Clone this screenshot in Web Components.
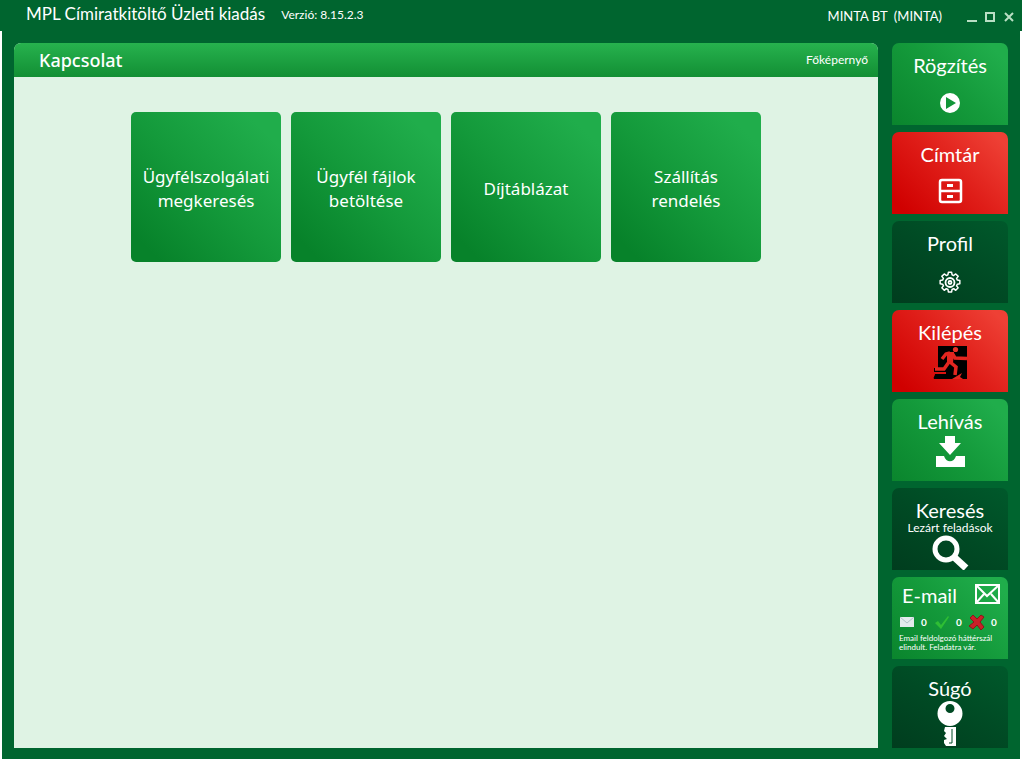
<!DOCTYPE html>
<html lang="hu">
<head>
<meta charset="utf-8">
<title>MPL Címiratkitöltő</title>
<style>
html,body{margin:0;background:#fff}
body{font-family:Lato,"Open Sans",sans-serif;color:#fff}
</style>
</head>
<body>
<mpl-app></mpl-app>
<script>
const define = (name, html) => {
  const template = document.createElement('template');
  template.innerHTML = html;
  customElements.define(name, class extends HTMLElement {
    constructor() {
      super();
      this.attachShadow({mode: 'open'}).append(template.content.cloneNode(true));
    }
  });
};

define('mpl-titlebar', `
<style>
:host{display:flex;height:31px;box-sizing:border-box;padding:0 3px 0 26px;background:#00652f;align-items:flex-start}
h1{margin:0;font-size:17px;font-weight:400;line-height:28px;white-space:nowrap}
.version{margin-left:16px;font-size:12px;line-height:30px}
.user{margin-left:auto;font-size:13px;line-height:32px;white-space:pre}
.controls{display:flex;margin:8px 0 0 20px}
button{all:unset;width:19px;height:18px}
svg{display:block;width:19px;height:18px;fill:none;stroke:#b9dfc4;stroke-width:2}
</style>
<h1>MPL Címiratkitöltő Üzleti kiadás</h1>
<span class="version">Verzió: 8.15.2.3</span>
<span class="user">MINTA BT  (MINTA)</span>
<div class="controls">
<button aria-label="Kis méret"><svg viewBox="0 0 19 18"><path d="M5 13h10"/></svg></button>
<button aria-label="Teljes méret"><svg viewBox="0 0 19 18"><path d="M5 5h8v8H5z"/></svg></button>
<button aria-label="Bezárás"><svg viewBox="0 0 19 18"><path d="m5 5 8 8m0-8-8 8"/></svg></button>
</div>`);

define('mpl-panel', `
<style>
:host{display:flex;flex-direction:column;flex:1;min-width:0;background:#dff3e4;border-radius:7px 7px 0 0}
header{display:flex;height:34px;padding:0 10px 0 25px;align-items:center;justify-content:space-between;background:linear-gradient(#27b24e,#128f34);border-radius:7px 7px 0 0}
h2{margin:0;font:500 18px/34px "Noto Sans",sans-serif}
a{color:#fff;text-decoration:none;font-size:12px;line-height:34px}
.tiles{display:flex;flex-wrap:wrap;justify-content:center;gap:10px;padding:35px 20px}
</style>
<header><h2><slot name="title"></slot></h2><a href="#">Főképernyő</a></header>
<div class="tiles"><slot></slot></div>`);

define('mpl-tile', `
<style>
:host{display:block;width:150px;height:150px}
button{all:unset;box-sizing:border-box;display:flex;width:100%;height:100%;padding:4px 8px 0;align-items:center;justify-content:center;text-align:center;border-radius:5px;background:linear-gradient(45deg,#07822a 10%,#149a3b 50%,#20ad4b 88%);font:17px/24px "Noto Sans",sans-serif}
</style>
<button><span><slot></slot></span></button>`);

define('mpl-nav-tile', `
<style>
:host{--fill:linear-gradient(45deg,#0a852d,#149a3b 50%,#20ad4b 90%);display:flex;flex:1}
:host([tone=red]){--fill:linear-gradient(45deg,#d00000 8%,#df1d18 50%,#ee4035 92%)}
:host([tone=dark]){--fill:linear-gradient(30deg,#003d1e,#004a24 50%,#00592b)}
button{all:unset;box-sizing:border-box;display:flex;flex-direction:column;width:100%;min-height:82px;padding-top:11px;border-radius:7px 7px 0 0;background:var(--fill);text-align:center}
.title{font-size:20px;line-height:22px}
::slotted(small){display:block;font-size:12px;line-height:14px}
::slotted(svg){display:block;width:116px}
</style>
<button><span class="title"><slot name="title"></slot></span><slot></slot></button>`);

define('mpl-mail-tile', `
<style>
:host{display:flex;flex:1}
button{all:unset;box-sizing:border-box;display:flex;flex-direction:column;width:100%;min-height:82px;padding:6px 2px 0 7px;border-radius:7px 7px 0 0;background:linear-gradient(45deg,#0a852d,#149a3b 50%,#20ad4b 90%)}
.head{display:flex;justify-content:space-between;padding:0 5px 0 3px;font-size:20px;line-height:24px}
.counts{display:grid;grid-template-columns:repeat(3,35px);margin-top:7px;font-size:10px;line-height:16px;font-weight:700}
.counts span{display:flex;align-items:center;gap:6px}
svg{display:block}
p{margin:4px 0 0;font-size:8px;line-height:9px;white-space:nowrap}
</style>
<button>
<div class="head"><span>E-mail</span>
<svg width="28" height="24" viewBox="0 0 28 24" fill="none" stroke="#fff" stroke-width="2"><path d="M3 2h23v18H3zL14 13 26 2M3 20l8-9m15 9-8-9"/></svg></div>
<div class="counts">
<span><svg width="16" height="16" viewBox="0 0 16 16"><path fill="#e4ebed" d="M1 3h14v10H1z"/><path d="m1 3 7 6 7-6" fill="none" stroke="#b0c4c8"/></svg>0</span>
<span><svg width="16" height="16" viewBox="0 0 16 16"><path d="m1 9 3-2 3 4 7-9 1 1-8 12z" fill="#2fbe34"/></svg>0</span>
<span><svg width="16" height="16" viewBox="0 0 16 16"><path d="m1 4 3-3 4 4 4-4 3 2-4 5 4 5-3 3-4-5-4 4-4-3 5-4z" fill="#c92028" stroke="#8d1618"/></svg>0</span>
</div>
<p>Email feldolgozó háttérszál<br>elindult. Feladatra vár.</p>
</button>`);

define('mpl-app', `
<style>
:host{display:flex;flex-direction:column;min-height:100vh}
main{display:flex;flex:1;gap:14px;margin:0 2px;padding:12px 12px 11px;background:#00652f}
nav{display:flex;flex-direction:column;gap:7px;width:116px}
</style>
<mpl-titlebar></mpl-titlebar>
<main>
<mpl-panel><span slot="title">Kapcsolat</span>
<mpl-tile>Ügyfélszolgálati megkeresés</mpl-tile>
<mpl-tile>Ügyfél fájlok betöltése</mpl-tile>
<mpl-tile>Díjtáblázat</mpl-tile>
<mpl-tile>Szállítás<br>rendelés</mpl-tile>
</mpl-panel>
<nav>
<mpl-nav-tile><span slot="title">Rögzítés</span>
<svg viewBox="0 0 116 49"><path fill="#fff" fill-rule="evenodd" d="M58 17a10 10 0 1 0 0 20 10 10 0 0 0 0-20zm-4 4 10 6-10 6z"/></svg></mpl-nav-tile>
<mpl-nav-tile tone="red"><span slot="title">Címtár</span>
<svg viewBox="0 0 116 49" fill="none" stroke="#fff" stroke-width="2.500"><rect x="48" y="15" width="21" height="22" rx="2"/><path d="M48 26h21"/><path d="M55 20.500h6M55 31.500h6" stroke-width="3"/></svg></mpl-nav-tile>
<mpl-nav-tile tone="dark"><span slot="title">Profil</span>
<svg viewBox="0 0 116 49" fill="none" stroke="#fff" stroke-width="1.800"><path stroke-linejoin="round" d="M56 18h4l.5 3 2 1 2.500-2 3 3-2 2.500 1 2 3 .5v4l-3 .5-1 2 2 2.500-3 3-2.500-2-2 1-.5 3h-4l-.5-3-2-1-2.500 2-3-3 2-2.500-1-2-3-.5v-4l3-.5 1-2-2-2.500 3-3 2.500 2 2-1z" transform="translate(10.440 3.500) scale(.82)"/><circle cx="58" cy="28.500" r="4.500"/><circle cx="58" cy="28.500" r="1.500"/></svg></mpl-nav-tile>
<mpl-nav-tile tone="red"><span slot="title">Kilépés</span>
<svg viewBox="0 -1 116 49"><path fill="#000" d="M46 2h29v33H42c-1-2 1-3 1-5h11v-2H42v-4h4z"/><circle cx="63.500" cy="5.500" r="2.600" fill="#e93028"/><path d="M55 8h7l-1 11h-6z" fill="#e42620"/><path d="m58 9-4 1-4 5M60 9l3 5 12 .5M57 18l-5 7H43M58 18l6 5-1 8" fill="none" stroke="#e42620" stroke-width="3.500"/><path d="m60 35 10-6-2 4 3 2" fill="#e42620"/></svg></mpl-nav-tile>
<mpl-nav-tile><span slot="title">Lehívás</span>
<svg viewBox="0 -1 116 49" fill="#fff"><path d="M53 3h10v7h6L58 22 47 10h6zM44 23h8c2 7 10 7 12 0h9v11H44z"/></svg></mpl-nav-tile>
<mpl-nav-tile tone="dark"><span slot="title">Keresés</span><small>Lezárt feladások</small>
<svg viewBox="0 3 116 35" fill="none" stroke="#fff"><circle cx="54" cy="17" r="11" stroke-width="5"/><path d="m62 25 12 11" stroke-width="7"/></svg></mpl-nav-tile>
<mpl-mail-tile></mpl-mail-tile>
<mpl-nav-tile tone="dark"><span slot="title">Súgó</span>
<svg viewBox="0 -1 116 49" fill="#fff"><path fill-rule="evenodd" d="M58 1a12 12 0 1 0 0 25 12 12 0 0 0 0-25zm0 3a4.500 4.500 0 1 1 0 9 4.500 4.500 0 0 1 0-9z"/><path d="M53 27h11v19H54l-2-3v-3l3-1-3-3 2-3-2-2z"/><path d="M60 29v14h-3" fill="none" stroke="#004c26"/></svg></mpl-nav-tile>
</nav>
</main>`);
</script>
</body>
</html>
